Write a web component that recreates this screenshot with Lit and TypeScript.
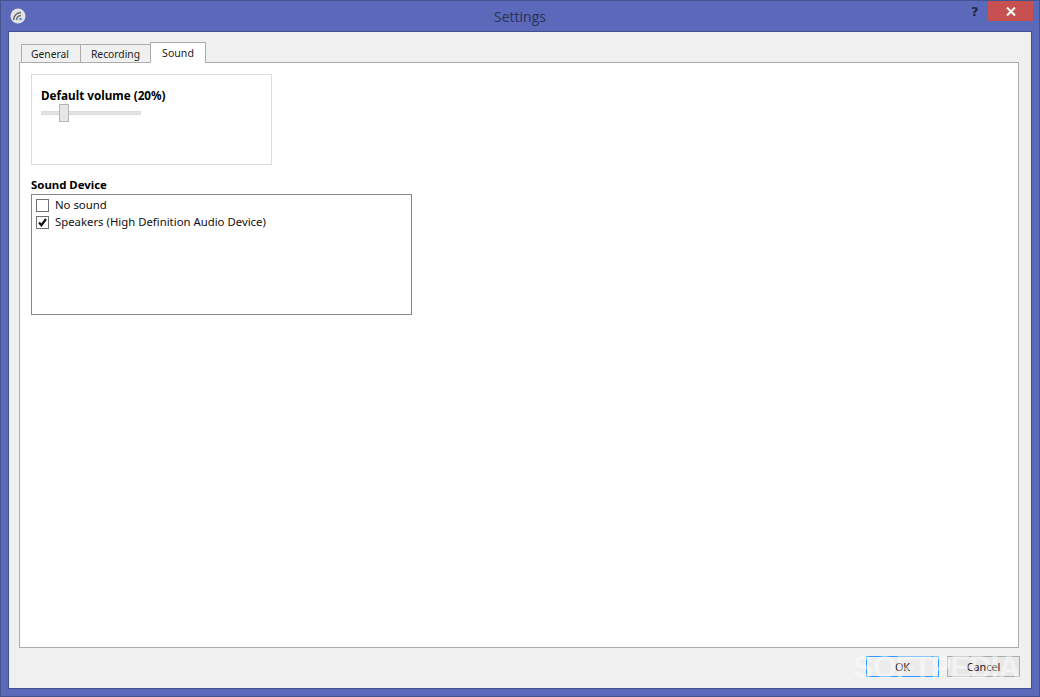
import { LitElement, html, css } from "lit";
import { customElement } from "lit/decorators.js";

@customElement("app-root")
export class AppRoot extends LitElement {
  static styles = css`
    :host { display: block; width: 1040px; height: 697px; font-family: "Noto Sans", "Open Sans", sans-serif; font-size: 11.35px; color: #111; }
    * { box-sizing: border-box; }
    .win { width: 1040px; height: 697px; background: #5b69bb; border: 1px solid #44528f; display: flex; flex-direction: column; padding: 0 7px 7px 7px; position: relative; }
    .title { height: 30px; flex: none; display: flex; align-items: flex-start; position: relative; margin: 0 -7px; }
    .logo { margin: 7px 0 0 9px; width: 16px; height: 16px; flex: none; }
    .ttext { position: absolute; left: 0; right: 0; top: 6px; text-align: center; font-size: 14px; color: #2b3054; line-height: 20px; font-family: "Open Sans", sans-serif; }
    .help { position: absolute; left: 970px; top: 3px; font: bold 13px/16px "DejaVu Sans", sans-serif; color: #23264a; }
    .close { position: absolute; left: 987px; top: 0; width: 45px; height: 20px; background: #c75050; display: flex; align-items: center; justify-content: center; }
    .client { flex: 1; background: #f0f0f0; border: 1px solid #40508f; padding: 10px 12px 0 10px; display: flex; flex-direction: column; min-height: 0; }
    .tabs { display: flex; align-items: flex-end; height: 21px; padding-left: 2px; flex: none; position: relative; z-index: 1; margin-bottom: -1px; }
    .tab { height: 19px; border: 1px solid #acacac; background: #f0f0f0; display: flex; align-items: center; justify-content: center; font-size: 10.3px; margin-right: -1px; color: #222; }
    .tab.a { height: 21px; background: #fff; border-bottom: 0; margin-right: 0; padding-bottom: 1px; font-size: 10.6px; }
    .w1 { width: 60px; padding-right: 2px; } .w2 { width: 71px; } .w3 { width: 56px; }
    .pane { flex: 1; background: #fff; border: 1px solid #acacac; padding: 11px 11px; display: flex; flex-direction: column; align-items: flex-start; min-height: 0; }
    .group { width: 241px; height: 91px; border: 1px solid #dcdcdc; padding: 12px 9px; flex: none; }
    .bold { font: bold 11.7px/16px "Noto Sans", sans-serif; color: #000; }
    .slider { width: 100px; height: 10px; margin-top: 5px; position: relative; display: flex; align-items: center; }
    .track { width: 100%; height: 4px; background: #e2e4e3; border: 1px solid #dcdedd; }
    .thumb { position: absolute; left: 18px; top: -4px; width: 10px; height: 18px; background: #e6e6e6; border: 1px solid #b4b4b4; }
    .sdlabel { margin-top: 13px; font: bold 11.4px/14px "Noto Sans", sans-serif; color: #000; }
    .list { width: 381px; height: 121px; margin-top: 2px; border: 1px solid #828790; padding: 2px 4px; flex: none; }
    .row { height: 17px; display: flex; align-items: center; gap: 6px; line-height: 15px; }
    .row span.t { position: relative; top: -1px; }
    .cb { width: 13px; height: 13px; border: 1px solid #707070; background: #fff; display: flex; align-items: center; justify-content: center; flex: none; }
    .foot { height: 40px; flex: none; display: flex; justify-content: flex-end; align-items: flex-start; gap: 8px; padding: 8px 0 0 0; position: relative; margin-right: -1px; }
    .btn { width: 73px; height: 21px; border: 1px solid #acacac; background: #e8e8e8; display: flex; align-items: center; justify-content: center; font-size: 10.8px; color: #111; }
    .btn.f { border-color: #3399ff; background: #ececec; }
    .mark { position: absolute; right: 1px; top: 3px; font: bold 31px/34px "Liberation Sans", sans-serif; letter-spacing: -1.3px; color: rgba(255,255,255,.45); pointer-events: none; z-index: 2; }
  `;

  render() {
    return html`<div class="win">
      <div class="title">
        <svg class="logo" viewBox="0 0 16 16">
          <circle cx="8" cy="8" r="7.5" fill="#e4e4e4"/>
          <path d="M3.5 12 A7.5 7.5 0 0 1 11 4.5 M6.5 12 A4.5 4.5 0 0 1 11 7.5" fill="none" stroke="#6b6b70" stroke-width="1.5"/>
          <circle cx="10.5" cy="11" r="1.3" fill="#3a94d8"/>
        </svg>
        <div class="ttext">Settings</div>
        <div class="help">?</div>
        <div class="close">
          <svg width="10" height="9" viewBox="0 0 10 9"><path d="M1 .5 L9 8.5 M9 .5 L1 8.5" stroke="#fff" stroke-width="2"/></svg>
        </div>
      </div>
      <div class="client">
        <div class="tabs">
          <div class="tab w1">General</div>
          <div class="tab w2">Recording</div>
          <div class="tab a w3">Sound</div>
        </div>
        <div class="pane">
          <div class="group">
            <div class="bold">Default volume (20%)</div>
            <div class="slider"><div class="track"></div><div class="thumb"></div></div>
          </div>
          <div class="sdlabel">Sound Device</div>
          <div class="list">
            <div class="row"><span class="cb"></span><span class="t">No sound</span></div>
            <div class="row"><span class="cb"><svg width="11" height="11" viewBox="0 0 11 11"><path d="M2 5.5 L4.4 8.2 L9 2" fill="none" stroke="#111" stroke-width="2.2"/></svg></span><span class="t">Speakers (High Definition Audio Device)</span></div>
          </div>
        </div>
        <div class="foot">
          <div class="btn f">OK</div>
          <div class="btn">Cancel</div>
          <div class="mark">SOFTPEDIA</div>
        </div>
      </div>
    </div>`;
  }
}
